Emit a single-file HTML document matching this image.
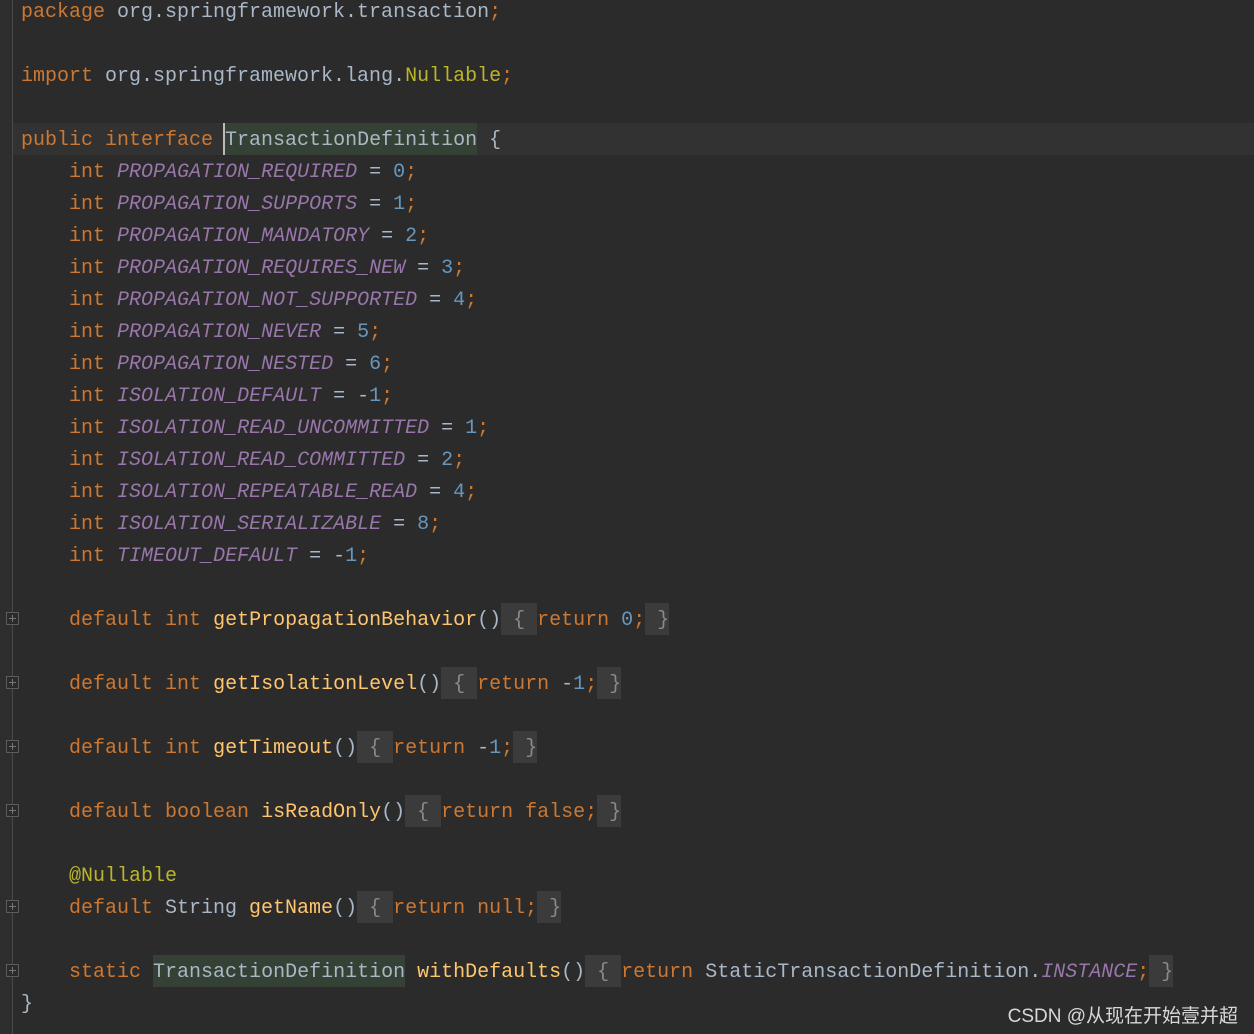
<!DOCTYPE html>
<html><head><meta charset="utf-8"><style>
html,body{margin:0;padding:0;}
body{width:1254px;height:1034px;background:#2b2b2b;position:relative;overflow:hidden;font-family:"Liberation Mono",monospace;font-size:20px;color:#a9b7c6;}
.gut{position:absolute;left:0;top:0;width:12px;height:1034px;background:#2e2e2e;border-right:1px solid #4a4a4a;}
.l{position:absolute;left:21px;height:32px;line-height:32px;white-space:pre;margin-top:2px;}
.l.b{line-height:36px;margin-top:0}
.k{color:#cc7832}.c{color:#9876aa;font-style:italic}.n{color:#6897bb}.m{color:#ffc66d}.a{color:#bbb529}
.f{background:#3b3b3b;color:#8a8a8a;display:inline-block;height:32px;vertical-align:top}
.cur{position:absolute;left:13px;right:0;top:123px;height:32px;background:#323232;}
.hl{background:#344134;display:inline-block;height:32px;vertical-align:top}
.fold{position:absolute;left:6px;width:13px;height:13px;border:1px solid #5c5c5c;background:#2b2b2b;box-sizing:border-box;margin-top:-1px}
.fold:before{content:"";position:absolute;left:2px;top:5px;width:7px;height:1px;background:#777}
.fold:after{content:"";position:absolute;left:5px;top:2px;width:1px;height:7px;background:#777}
.wm{position:absolute;right:16px;top:1001px;font-family:"Liberation Sans","Noto Sans CJK SC",sans-serif;font-size:19px;color:#d8d8d8;}
.caret{border-left:2px solid #bbb;margin-left:-2px}
</style></head><body>
<div class="gut"></div>
<div class="cur"></div>
<div class="l" style="top:-5px"><span class="k">package</span> org.springframework.transaction<span class="k">;</span></div>
<div class="l" style="top:59px"><span class="k">import</span> org.springframework.lang.<span class="a">Nullable</span><span class="k">;</span></div>
<div class="l b" style="top:123px"><span class="k">public interface</span> <span class="hl caret">TransactionDefinition</span> {</div>
<div class="l" style="top:155px">    <span class="k">int</span> <span class="c">PROPAGATION_REQUIRED</span> = <span class="n">0</span><span class="k">;</span></div>
<div class="l" style="top:187px">    <span class="k">int</span> <span class="c">PROPAGATION_SUPPORTS</span> = <span class="n">1</span><span class="k">;</span></div>
<div class="l" style="top:219px">    <span class="k">int</span> <span class="c">PROPAGATION_MANDATORY</span> = <span class="n">2</span><span class="k">;</span></div>
<div class="l" style="top:251px">    <span class="k">int</span> <span class="c">PROPAGATION_REQUIRES_NEW</span> = <span class="n">3</span><span class="k">;</span></div>
<div class="l" style="top:283px">    <span class="k">int</span> <span class="c">PROPAGATION_NOT_SUPPORTED</span> = <span class="n">4</span><span class="k">;</span></div>
<div class="l" style="top:315px">    <span class="k">int</span> <span class="c">PROPAGATION_NEVER</span> = <span class="n">5</span><span class="k">;</span></div>
<div class="l" style="top:347px">    <span class="k">int</span> <span class="c">PROPAGATION_NESTED</span> = <span class="n">6</span><span class="k">;</span></div>
<div class="l" style="top:379px">    <span class="k">int</span> <span class="c">ISOLATION_DEFAULT</span> = -<span class="n">1</span><span class="k">;</span></div>
<div class="l" style="top:411px">    <span class="k">int</span> <span class="c">ISOLATION_READ_UNCOMMITTED</span> = <span class="n">1</span><span class="k">;</span></div>
<div class="l" style="top:443px">    <span class="k">int</span> <span class="c">ISOLATION_READ_COMMITTED</span> = <span class="n">2</span><span class="k">;</span></div>
<div class="l" style="top:475px">    <span class="k">int</span> <span class="c">ISOLATION_REPEATABLE_READ</span> = <span class="n">4</span><span class="k">;</span></div>
<div class="l" style="top:507px">    <span class="k">int</span> <span class="c">ISOLATION_SERIALIZABLE</span> = <span class="n">8</span><span class="k">;</span></div>
<div class="l" style="top:539px">    <span class="k">int</span> <span class="c">TIMEOUT_DEFAULT</span> = -<span class="n">1</span><span class="k">;</span></div>
<div class="fold" style="top:613px"></div>
<div class="l b" style="top:603px">    <span class="k">default int</span> <span class="m">getPropagationBehavior</span>()<span class="f"> { </span><span class="k">return</span> <span class="n">0</span><span class="k">;</span><span class="f"> }</span></div>
<div class="fold" style="top:677px"></div>
<div class="l b" style="top:667px">    <span class="k">default int</span> <span class="m">getIsolationLevel</span>()<span class="f"> { </span><span class="k">return</span> -<span class="n">1</span><span class="k">;</span><span class="f"> }</span></div>
<div class="fold" style="top:741px"></div>
<div class="l b" style="top:731px">    <span class="k">default int</span> <span class="m">getTimeout</span>()<span class="f"> { </span><span class="k">return</span> -<span class="n">1</span><span class="k">;</span><span class="f"> }</span></div>
<div class="fold" style="top:805px"></div>
<div class="l b" style="top:795px">    <span class="k">default boolean</span> <span class="m">isReadOnly</span>()<span class="f"> { </span><span class="k">return false;</span><span class="f"> }</span></div>
<div class="l" style="top:859px">    <span class="a">@Nullable</span></div>
<div class="fold" style="top:901px"></div>
<div class="l b" style="top:891px">    <span class="k">default</span> String <span class="m">getName</span>()<span class="f"> { </span><span class="k">return null;</span><span class="f"> }</span></div>
<div class="fold" style="top:965px"></div>
<div class="l b" style="top:955px">    <span class="k">static</span> <span class="hl">TransactionDefinition</span> <span class="m">withDefaults</span>()<span class="f"> { </span><span class="k">return</span> StaticTransactionDefinition.<span class="c">INSTANCE</span><span class="k">;</span><span class="f"> }</span></div>
<div class="l" style="top:987px">}</div>
<div class="wm">CSDN @从现在开始壹并超</div>
</body></html>
